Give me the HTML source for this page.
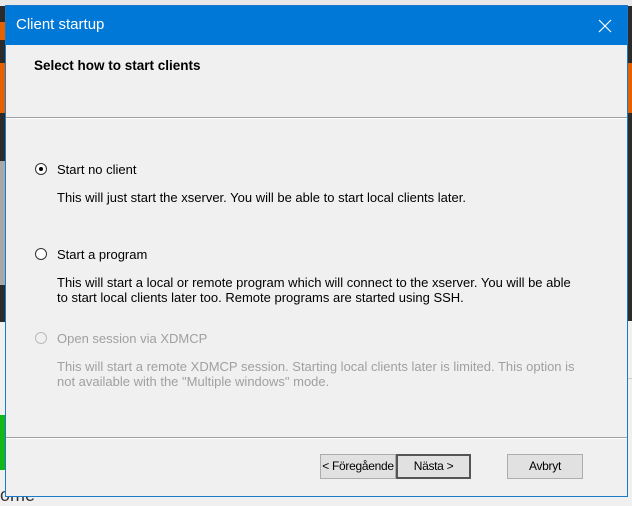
<!DOCTYPE html>
<html><head><style>
*{margin:0;padding:0;box-sizing:border-box}
body{width:632px;height:503px;overflow:hidden;background:#f0f0f0;font-family:"Liberation Sans",sans-serif;font-size:13px;color:#000;position:relative}
.a{position:absolute;white-space:nowrap}
.r{position:absolute;width:12px;height:12px;border-radius:50%;border:1px solid #333;background:#fff}
.btn{position:absolute;height:25px;border:1px solid #adadad;background:#e1e1e1;text-align:center;line-height:23px;font-size:12px;white-space:nowrap;letter-spacing:-0.3px}
.g{color:#a0a0a0}
</style></head><body>
<div class="a" style="left:0;top:0;width:632px;height:6px;background:#e8e8e8"></div>
<div class="a" style="left:0;top:6px;width:6px;height:57px;background:#2b2b2b"></div>
<div class="a" style="left:0;top:22px;width:6px;height:18px;background:#e66000"></div>
<div class="a" style="left:0;top:63px;width:6px;height:50px;background:#e66000"></div>
<div class="a" style="left:0;top:113px;width:6px;height:48px;background:#2b2b2b"></div>
<div class="a" style="left:0;top:161px;width:6px;height:124px;background:#a8a8a8"></div>
<div class="a" style="left:0;top:285px;width:6px;height:37px;background:#2b2b2b"></div>
<div class="a" style="left:0;top:415px;width:6px;height:55px;background:#14b814"></div>
<div class="a" style="left:627px;top:6px;width:5px;height:57px;background:#2b2b2b"></div>
<div class="a" style="left:627px;top:63px;width:5px;height:50px;background:#e66000"></div>
<div class="a" style="left:627px;top:113px;width:5px;height:208px;background:#2b2b2b"></div>
<div class="a" style="left:627px;top:378px;width:5px;height:1px;background:#ccc"></div>
<div class="a" style="left:0;top:485px;font-size:18px;color:#333">ome</div>
<div class="a" style="left:5px;top:5px;width:623px;height:492px;border:1px solid #1979ca;background:#f0f0f0"></div>
<div class="a" style="left:6px;top:6px;width:621px;height:39px;background:#0078d7"></div>
<div class="a" style="left:16px;top:16px;font-size:15px;color:#fff">Client startup</div>
<svg class="a" style="left:598px;top:19px" width="14" height="14"><path d="M1 1L13 13M13 1L1 13" stroke="#fff" stroke-width="1.2"/></svg>
<div class="a" style="left:34px;top:58px;font-weight:bold;font-size:13.5px">Select how to start clients</div>
<div class="a" style="left:6px;top:117px;width:621px;height:1px;background:#a0a0a0"></div>
<div class="a" style="left:6px;top:118px;width:621px;height:1px;background:#fff"></div>
<div class="r" style="left:35px;top:163px"></div>
<div class="a" style="left:39px;top:167px;width:4px;height:4px;border-radius:50%;background:#000"></div>
<div class="a" style="left:57px;top:162px">Start no client</div>
<div class="a" style="left:57px;top:190px">This will just start the xserver. You will be able to start local clients later.</div>
<div class="r" style="left:35px;top:248px"></div>
<div class="a" style="left:57px;top:247px">Start a program</div>
<div class="a" style="left:57px;top:275px">This will start a local or remote program which will connect to the xserver. You will be able</div>
<div class="a" style="left:57px;top:290px">to start local clients later too. Remote programs are started using SSH.</div>
<div class="r" style="left:35px;top:332px;border-color:#bbb;background:#f0f0f0"></div>
<div class="a g" style="left:57px;top:331px">Open session via XDMCP</div>
<div class="a g" style="left:57px;top:359px">This will start a remote XDMCP session. Starting local clients later is limited. This option is</div>
<div class="a g" style="left:57px;top:374px">not available with the "Multiple windows" mode.</div>
<div class="a" style="left:6px;top:437px;width:621px;height:1px;background:#a0a0a0"></div>
<div class="a" style="left:6px;top:438px;width:621px;height:1px;background:#fff"></div>
<div class="btn" style="left:320px;top:454px;width:76px">&lt; Föregående</div>
<div class="btn" style="left:396px;top:454px;width:75px;border:2px solid #555;line-height:21px">Nästa &gt;</div>
<div class="btn" style="left:507px;top:454px;width:76px">Avbryt</div>
</body></html>
